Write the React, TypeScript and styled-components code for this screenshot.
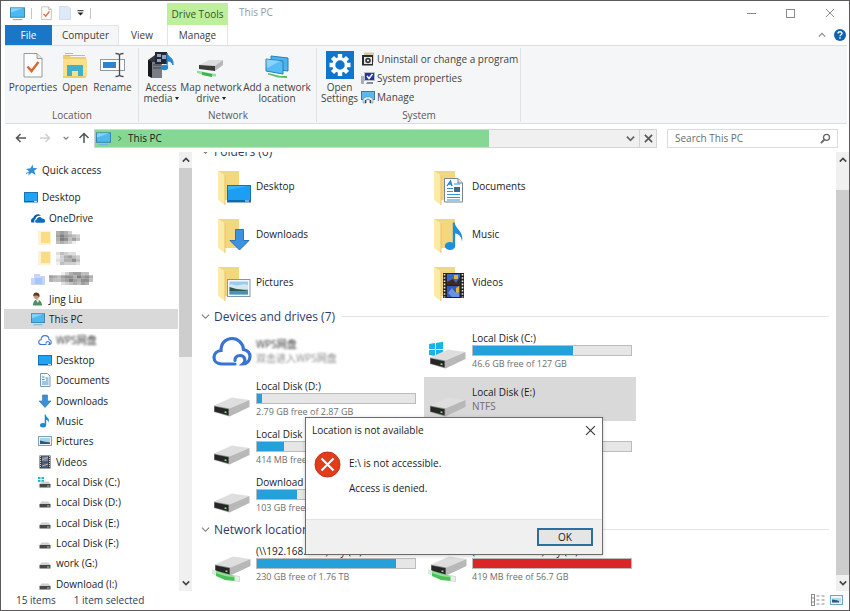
import React from "react";
import styled, { createGlobalStyle } from "styled-components";

const GlobalStyle = createGlobalStyle`
  * { box-sizing: border-box; }
  html, body, #root { height: 100%; }
  body {
    margin: 0;
    overflow: hidden;
    font-family: "Open Sans", "Noto Sans", "Noto Sans CJK SC", sans-serif;
    font-size: 10px;
    line-height: 14px;
    color: #1a1a1a;
  }
  button, input {
    font: inherit;
    color: inherit;
    border: 0;
    padding: 0;
    margin: 0;
    background: none;
  }
  ul { list-style: none; margin: 0; padding: 0; }
  svg { display: block; flex: none; }
`;

/* ---------- window frame ---------- */

const Window = styled.div`
  position: relative;
  display: flex;
  flex-direction: column;
  height: 100%;
  background: #fff;
  border: 1px solid #5c5a5b;
  overflow: hidden;
`;

const Header = styled.header`
  display: grid;
  grid-template-columns: 162px auto 1fr auto;
  grid-template-rows: 24px 20px;
  flex: none;
  padding-left: 4px;
`;

const QuickBar = styled.div`
  display: flex;
  align-items: center;
  padding-left: 5px;
`;

const QuickButton = styled.button<{ $w: number }>`
  display: flex;
  justify-content: center;
  width: ${(p) => p.$w}px;
`;

const Separator = styled.span<{ $space: number }>`
  width: 1px;
  height: 11px;
  margin: 0 ${(p) => p.$space}px;
  background: #c4c4c4;
`;

const ToolTab = styled.div`
  width: 61px;
  margin-top: 2px;
  padding-top: 4px;
  background: #bdf09b;
  color: #35552a;
  text-align: center;
`;

const WindowTitle = styled.h1`
  margin: 0;
  padding: 4px 0 0 11px;
  font-size: 10px;
  line-height: 14px;
  font-weight: 400;
  color: #9a9a9a;
`;

const WindowButtons = styled.div`
  display: flex;
  align-items: center;
`;

const CaptionButton = styled.button`
  display: flex;
  align-items: center;
  justify-content: center;
  width: 39px;
  height: 22px;
`;

const Tabs = styled.nav`
  display: flex;
`;

const Tab = styled.button<{ $w: number; $kind?: "file" | "active" | "tool" }>`
  width: ${(p) => p.$w}px;
  height: 20px;
  color: ${(p) => (p.$kind === "file" ? "#fff" : "#3c3c3c")};
  background: ${(p) => (p.$kind === "file" ? "#1a76c6" : p.$kind === "active" ? "#f5f6f7" : "#fff")};
  box-shadow: ${(p) =>
    p.$kind === "active"
      ? "inset -1px 1px 0 #e3e4e5"
      : p.$kind === "tool"
        ? "inset 1px 0 0 #e3e4e5, inset -1px 0 0 #e3e4e5"
        : "none"};
`;

const RibbonTools = styled.div`
  grid-column: 4;
  display: flex;
  align-items: center;
  justify-content: flex-end;
  gap: 8px;
  padding-right: 3px;
`;

/* ---------- ribbon ---------- */

const Ribbon = styled.div`
  display: flex;
  flex: none;
  height: 79px;
  margin: 0 2px 0 4px;
  background: #f5f6f7;
  border-top: 1px solid #dcdddf;
  border-bottom: 1px solid #dcdddf;
`;

const Group = styled.section<{ $w: number }>`
  display: flex;
  flex-direction: column;
  justify-content: space-between;
  width: ${(p) => p.$w}px;
  margin: 2px 0 1px;
  padding: 2px 3px 0 4px;
  border-right: 1px solid #e1e2e4;
`;

const GroupItems = styled.div`
  display: flex;
  align-items: flex-start;
`;

const GroupLabel = styled.div`
  color: #5a5a5a;
  text-align: center;
`;

const BigButton = styled.button<{ $w: number }>`
  display: flex;
  flex-direction: column;
  align-items: center;
  gap: 2px;
  width: ${(p) => p.$w}px;
  line-height: 11px;
  color: #444;
  white-space: nowrap;
`;

const SmallList = styled.div`
  display: flex;
  flex-direction: column;
  margin-top: -1px;
  padding-left: 3px;
`;

const SmallButton = styled.button`
  display: flex;
  align-items: center;
  gap: 2px;
  height: 19px;
  color: #444;
  white-space: nowrap;
`;

const Caret = styled.span`
  display: inline-block;
  margin-left: 2px;
  vertical-align: 2px;
  border: 2px solid transparent;
  border-top: 3px solid #222;
  border-bottom: 0;
`;

/* ---------- address row ---------- */

const AddressRow = styled.div`
  display: flex;
  align-items: center;
  flex: none;
  height: 28px;
  padding: 0 11px 0 10px;
`;

const NavButton = styled.button<{ $w: number }>`
  display: flex;
  align-items: center;
  justify-content: center;
  width: ${(p) => p.$w}px;
  height: 18px;
`;

const AddressBar = styled.div`
  display: flex;
  flex: 1;
  height: 19px;
  border: 1px solid #d4d4d4;
  background: #f0f0f0;
`;

const Crumbs = styled.div<{ $progress: number }>`
  display: flex;
  flex: 1;
  align-items: center;
  gap: 5px;
  padding: 0 4px 0 1px;
  background: linear-gradient(#85d793, #85d793) 0 0 / ${(p) => p.$progress}% 100% no-repeat;
  color: #10240f;
`;

const CrumbButton = styled.button`
  flex: 1;
  text-align: left;
`;

const StopButton = styled.button`
  display: flex;
  align-items: center;
  justify-content: center;
  width: 17px;
  border-left: 1px solid #d4d4d4;
`;

const SearchBox = styled.label`
  display: flex;
  align-items: center;
  width: 171px;
  height: 19px;
  margin-left: 10px;
  padding: 0 6px 0 7px;
  border: 1px solid #dcdcdc;
`;

const SearchInput = styled.input`
  flex: 1;
  min-width: 0;
  outline: 0;
  &::placeholder { color: #6b6b6b; opacity: 1; }
`;

/* ---------- body ---------- */

const Body = styled.div`
  display: flex;
  flex: 1;
  min-height: 0;
`;

const Sidebar = styled.nav`
  width: 178px;
  flex: none;
  padding: 8px 1px 0 3px;
  overflow: hidden;
`;

const SideGroup = styled.ul<{ $fill?: boolean }>`
  display: flex;
  flex-direction: column;
  height: ${(p) => (p.$fill ? "calc(100% - 24px)" : "20px")};
  margin-top: ${(p) => (p.$fill ? "7px" : "0")};
`;

const SideRow = styled.li`
  display: flex;
  flex: 1 0 20px;
`;

const SideButton = styled.button<{ $level: number; $on?: boolean }>`
  display: flex;
  flex: 1;
  align-items: center;
  gap: 4px;
  padding-left: ${(p) => 13 + p.$level * 7}px;
  background: ${(p) => (p.$on ? "#d9d9d9" : "transparent")};
  white-space: nowrap;
`;

const Redacted = styled.span<{ $soft?: boolean }>`
  color: ${(p) => (p.$soft ? "#8a8a8a" : "#333")};
  filter: blur(1px);
`;

const Scrollbar = styled.div`
  display: flex;
  flex-direction: column;
  flex: none;
  width: 13px;
  background: #f0f0f0;
`;

const ScrollButton = styled.button`
  display: flex;
  align-items: center;
  justify-content: center;
  height: 16px;
`;

const Thumb = styled.div<{ $before: number; $size: number; $after: number }>`
  flex: 1;
  display: grid;
  grid-template-rows: ${(p) => `${p.$before}fr ${p.$size}fr ${p.$after}fr`};
  &::after {
    content: "";
    grid-row: 2;
    background: #cdcdcd;
  }
`;

const Content = styled.main`
  flex: 1;
  min-width: 0;
  overflow: hidden;
  padding: 0 7px 0 9px;
`;

const Sections = styled.div`
  margin-top: -13px;
`;

const SectionTitle = styled.h2`
  display: flex;
  align-items: center;
  gap: 4px;
  height: 25px;
  margin: 0;
  font-size: 12px;
  line-height: 16px;
  font-weight: 400;
  color: #2b3b6d;
  white-space: nowrap;
  &::after {
    content: "";
    flex: 1;
    height: 1px;
    margin-left: 3px;
    background: #e4e4e4;
  }
`;

const Tiles = styled.ul`
  display: grid;
  grid-template-columns: repeat(auto-fill, 212px);
  grid-auto-rows: 44px;
  gap: 4px;
  padding-left: 7px;
`;

const Tile = styled.li<{ $on?: boolean }>`
  display: flex;
  align-items: center;
  gap: 4px;
  padding: 0 4px;
  background: ${(p) => (p.$on ? "#d9d9d9" : "transparent")};
`;

const TileText = styled.div`
  flex: 1;
  min-width: 0;
  white-space: nowrap;
`;

const Note = styled.div<{ $small?: boolean }>`
  font-size: ${(p) => (p.$small ? 9 : 10)}px;
  color: #6e6e6e;
`;

const Meter = styled.div`
  width: 160px;
  height: 11px;
  margin: 0 0 1px;
  border: 1px solid #bcbcbc;
  background: #e6e6e6;
`;

const MeterFill = styled.div<{ $full?: boolean }>`
  height: 100%;
  background: ${(p) => (p.$full ? "#da2626" : "#26a0da")};
`;

const StatusBar = styled.footer`
  display: flex;
  align-items: center;
  flex: none;
  height: 19px;
  gap: 18px;
  padding: 0 6px 2px 15px;
  color: #2a3c5c;
`;

const ViewButtons = styled.div`
  display: flex;
  gap: 5px;
  margin-left: auto;
`;

/* ---------- dialog ---------- */

const Dialog = styled.div`
  position: absolute;
  left: 304px;
  top: 416px;
  width: 298px;
  display: flex;
  flex-direction: column;
  background: #fff;
  border: 1px solid #6c6c6c;
  box-shadow: 0 1px 4px rgba(0, 0, 0, 0.2);
`;

const DialogHead = styled.div`
  display: flex;
  align-items: center;
  justify-content: space-between;
  height: 24px;
  padding: 0 6px;
`;

const DialogBody = styled.div`
  display: flex;
  gap: 8px;
  height: 77px;
  padding: 9px 9px 0 8px;
`;

const DialogText = styled.div`
  display: flex;
  flex-direction: column;
  gap: 11px;
  padding-top: 5px;
`;

const DialogFoot = styled.div`
  display: flex;
  justify-content: flex-end;
  height: 35px;
  padding: 8px 9px 0;
  background: #f0f0f0;
  border-top: 1px solid #e3e3e3;
`;

const OkButton = styled.button`
  width: 56px;
  height: 18px;
  background: #e5e5e5;
  border: 2px solid #2c6f9f;
  line-height: 14px;
`;

/* ---------- drawings ---------- */

const Pc = ({ size = 15 }: { size?: number }) => (
  <svg width={size} height={size} viewBox="0 0 16 16">
    <rect x="0.5" y="2" width="15" height="10" fill="#4db8f2" stroke="#3a7fa8" />
    <path d="M1 12V7L14 2.5H1z" fill="#86d3fa" />
    <path d="M3 14.5h10" stroke="#6fb6dc" strokeWidth="1.2" />
  </svg>
);

const DesktopMini = () => (
  <svg width="14" height="14" viewBox="0 0 14 14">
    <rect x="0.5" y="2.5" width="13" height="9.5" fill="#1fa4f4" stroke="#1876b5" />
    <path d="M1 11.5h12" stroke="#0b63a5" />
    <path d="M10 11.5h3" stroke="#bfe3fb" />
  </svg>
);

const CheckPage = ({ w, h }: { w: number; h: number }) => (
  <svg width={w} height={h} viewBox="0 0 20 26">
    <path d="M1 1.5h13l5 5V25H1z" fill="#fcfcfc" stroke="#9a9a9a" />
    <path d="M14 1.5v5h5" fill="#e8e8e8" stroke="#9a9a9a" />
    <path d="M4.500 14.500l4 4.500 7-9" fill="none" stroke="#d9692c" strokeWidth="2.400" />
  </svg>
);

const PaleFolder = () => (
  <svg width="12" height="14" viewBox="0 0 12 14">
    <path d="M0.500 0.500h8l3 2v11h-11z" fill="#dfe9f8" stroke="#d0def2" />
  </svg>
);

const OpenFolder = () => (
  <svg width="26" height="30" viewBox="0 0 26 30">
    <path d="M1 5h6l2 2h15v21H1z" fill="#efcf6d" />
    <path d="M3 3.500h8M3 5.500h20" stroke="#d3ba72" />
    <path d="M1 9h24v17H1z" fill="#fbe08b" />
    <path d="M5 26V15h16v11h-5v-5h-6v5z" fill="#42b0cb" />
  </svg>
);

const RenameIcon = () => (
  <svg width="26" height="30" viewBox="0 0 26 30">
    <rect x="0.500" y="9.500" width="24" height="11" fill="#fff" stroke="#8d9aa5" />
    <rect x="3" y="12" width="13" height="6" fill="#2f84d0" />
    <path d="M15.500 3.500c2.500 0 4 .5 4 2v19c0 1.500-1.500 2-4 2M23.500 3.500c-2.500 0-4 .5-4 2v19c0 1.500 1.500 2 4 2" fill="none" stroke="#4c4c4c" strokeWidth="1.300" />
  </svg>
);

const MediaIcon = () => (
  <svg width="28" height="30" viewBox="0 0 28 30">
    <path d="M1 10l7-5h9l-3 5v17H5l-4-2z" fill="#33363c" />
    <path d="M5 12h10v16H5z" fill="#787d86" />
    <path d="M1 10l4 2v16l-4-2z" fill="#16181c" />
    <path d="M6 15h8M6 18h8" stroke="#3c4048" />
    <rect x="8" y="2" width="12" height="12" fill="#222732" />
    <path d="M10 4h4v3h-4zM15 5h4v4h-4zM10 9h4v3h-4z" fill="#8fa3c4" />
    <ellipse cx="17.500" cy="17.500" rx="3.600" ry="2.800" fill="#1d88d8" />
    <path d="M20 17.500V3c1 5 7 4 6 12-1-3-3-4-5-4" fill="#1d88d8" stroke="#1d88d8" />
  </svg>
);

const NetDriveIcon = () => (
  <svg width="30" height="30" viewBox="0 0 30 30">
    <path d="M3 15l10-5h14l-7 6z" fill="#dcdcdc" />
    <path d="M19 16l8-6v5l-8 6z" fill="#b7b7b7" />
    <path d="M3 15l16 1v5L3 19z" fill="#3b3b3b" />
    <path d="M1 20.500l12 2.500 7 1v2.500l-8-.5-11-3z" fill="#8fe09a" />
    <path d="M6 22l10 2v3l-10-2z" fill="#3fb152" />
  </svg>
);

const NetPlaceIcon = () => (
  <svg width="28" height="30" viewBox="0 0 28 30">
    <path d="M8 6l17 2v13L8 19z" fill="#4bb4ee" stroke="#2b7eb4" />
    <path d="M3 9l17 2v13L3 21z" fill="#56bcf3" stroke="#2b7eb4" />
    <path d="M3.500 9.500l14 1.500L4 18z" fill="#8ad3f8" />
    <path d="M5 23l12 3 7 0v2l-9-.5-10-3z" fill="#52c163" />
  </svg>
);

const GearTile = () => (
  <svg width="28" height="30" viewBox="0 0 28 30">
    <rect y="1" width="28" height="28" fill="#0f76cc" />
    <g stroke="#fff" strokeWidth="4.400">
      <path d="M14 4v5M14 21v5M3.500 15h5M19.500 15h5M6.500 7.500l3.500 3.500M18 19l3.500 3.500M21.500 7.500L18 11M10 19l-3.500 3.500" />
    </g>
    <circle cx="14" cy="15" r="6.200" fill="#0f76cc" stroke="#fff" strokeWidth="3" />
  </svg>
);

const ProgramsIcon = () => (
  <svg width="14" height="14" viewBox="0 0 14 14">
    <path d="M3 0.500h10V10H3z" fill="#d6c9a5" />
    <path d="M1 3h11v10.500H1z" fill="#2d2d2d" />
    <path d="M3 5h8v7H3z" fill="#e8e8e8" />
    <circle cx="7" cy="8.500" r="2.800" fill="#3b3b3b" />
    <circle cx="7" cy="8.500" r="1" fill="#fff" />
  </svg>
);

const SysPropIcon = () => (
  <svg width="14" height="14" viewBox="0 0 14 14">
    <path d="M0 5h3v8H0z" fill="#a9adb4" />
    <rect x="3.500" y="1.500" width="10" height="8" fill="#2634a4" stroke="#b8bccb" />
    <path d="M6 5l2 2.500L11.500 3" fill="none" stroke="#fff" strokeWidth="1.500" />
    <path d="M6 11h6v2H5z" fill="#8a8e96" />
  </svg>
);

const ManageIcon = () => (
  <svg width="14" height="14" viewBox="0 0 14 14">
    <rect x="0.500" y="1.500" width="13" height="8" fill="#5cb9e9" stroke="#45799a" />
    <path d="M2 13V9l3-2h4l3 2v4H9v-3L7 9l-2 1v3z" fill="#eaf2f6" stroke="#6d8795" strokeWidth="0.600" />
    <path d="M4.500 10v3M9.500 10v3" stroke="#2c4656" strokeWidth="1.400" />
  </svg>
);

const Chevron = ({ dir, size = 8, color = "#444", weight = 1.5 }: { dir: "up" | "down" | "right"; size?: number; color?: string; weight?: number }) => (
  <svg width={size} height={size} viewBox="0 0 10 10">
    <path
      d={dir === "up" ? "M1 7l4-4 4 4" : dir === "down" ? "M1 3l4 4 4-4" : "M3.500 1.500L7 5 3.500 8.500"}
      fill="none"
      stroke={color}
      strokeWidth={weight}
    />
  </svg>
);

const Arrow = ({ dir, color }: { dir: "left" | "right" | "up"; color: string }) => (
  <svg width="12" height="12" viewBox="0 0 12 12">
    <path
      d={dir === "left" ? "M11 6H1.500M5.500 2L1.500 6l4 4" : dir === "right" ? "M1 6h9.500M6.500 2l4 4-4 4" : "M6 11V1.500M1.500 6L6 1.500 10.500 6"}
      fill="none"
      stroke={color}
      strokeWidth="1.500"
    />
  </svg>
);

const Cross = ({ size, color, weight = 1 }: { size: number; color: string; weight?: number }) => (
  <svg width={size} height={size} viewBox="0 0 10 10">
    <path d="M1 1l8 8M9 1L1 9" stroke={color} strokeWidth={weight} />
  </svg>
);

const Star = () => (
  <svg width="14" height="14" viewBox="0 0 14 14">
    <path d="M8.500 1.500l.8 3.500 4.200.3-3.300 2.500 1.300 4.200-3.700-2.200-3.600 2.700.9-4.300L2 6l4.500-.8z" fill="#2f8fdb" />
    <path d="M2 10.500l3-1.500" stroke="#2f8fdb" />
  </svg>
);

const OneDriveIcon = () => (
  <svg width="14" height="14" viewBox="0 0 14 14">
    <path d="M0 10c0-2 1-2.800 2.200-3C3 3.500 8 1.500 10 5c-3-1-5.500 1-5.500 3C3 8.500 3 10 3.500 11.500H1.500C.5 11.500 0 11 0 10z" fill="#0a5ea8" />
    <path d="M4.500 11.500c-.8-1.500 0-2.900 1.200-3.100C6 5.500 10 5 11 7.500c2 0 3 .8 3 2.200s-.6 2.100-1.500 2.100H5.500c-.4 0-.8-.1-1-.3z" fill="#0f6cbf" />
  </svg>
);

const BlurFolder = ({ color = "#f9dd85" }: { color?: string }) => (
  <svg width="14" height="16" viewBox="0 0 14 16">
    <rect x="0" y="1" width="13" height="14" fill={color} opacity="0.350" />
    <rect x="3" y="2" width="9" height="11" fill={color} />
  </svg>
);

const BlueBlock = () => (
  <svg width="14" height="14" viewBox="0 0 14 14">
    <path d="M0 6h3V2h6v2h5v9H0z" fill="#c4d6f8" />
    <path d="M4 6h7v6H4z" fill="#a9c4f6" />
  </svg>
);

const UserIcon = () => (
  <svg width="14" height="14" viewBox="0 0 14 14">
    <path d="M2 13.500c0-4 2-6 4-6s5 2 5 6z" fill="#4e9164" />
    <circle cx="5.500" cy="4" r="3" fill="#c99671" />
    <path d="M2.500 4C2 1 4 .3 5.500.4 8 .5 9 2.500 8.200 5 7 3.500 5 3 2.500 4z" fill="#5a3c2d" />
    <path d="M5 8l2 3 1-3" fill="#e9efe9" />
  </svg>
);

const CloudIcon = ({ size, weight }: { size: number; weight: number }) => (
  <svg width={size} height={size} viewBox="0 0 40 40">
    <path
      d="M23 33H10C5 33 2 30 2 26.500c0-4 3-6.500 7-7C9 12 14 7.500 20 7.500S31 12 31.500 18.500c4 1 6.500 3.500 6.500 7 0 4-3 7.500-7 7.500 3-2.500 2.500-8.500-3-8.500-3.500 0-5.500 2.500-5 5"
      fill="none"
      stroke="#3a74d2"
      strokeWidth={weight}
      strokeLinecap="round"
    />
  </svg>
);

const DocIcon = () => (
  <svg width="14" height="14" viewBox="0 0 14 14">
    <path d="M2.500 0.500h7l2.500 2.500v10.500H2.500z" fill="#f5fafd" stroke="#7c9bb0" />
    <path d="M4 4h2.500M7.500 5h3M4 6.500h2.500M4 9h6.500M4 11h6.500M8 7h2.500" stroke="#3c92cb" />
  </svg>
);

const DownIcon = () => (
  <svg width="14" height="14" viewBox="0 0 14 14">
    <path d="M4.500 1h5v6H13L7 13.500 1 7h3.500z" fill="#3a8fdb" stroke="#2c72b4" strokeWidth="0.600" />
  </svg>
);

const NoteIcon = () => (
  <svg width="14" height="14" viewBox="0 0 14 14">
    <ellipse cx="5" cy="11.200" rx="3" ry="2.200" fill="#1d88d0" />
    <path d="M6.700 11V.5h1c.2 3 4.500 3.500 3 8-.5-2-1.500-2.500-2.500-2.700V11z" fill="#1d88d0" />
  </svg>
);

const PicIcon = () => (
  <svg width="14" height="14" viewBox="0 0 14 14">
    <rect x="0.500" y="2.500" width="13" height="9" fill="#eef5fa" stroke="#7fa2b9" />
    <rect x="2" y="4" width="10" height="6" fill="#a9d2ec" />
    <path d="M2 6.500l4 1 6 1V10H2z" fill="#2d5a78" />
  </svg>
);

const FilmIcon = () => (
  <svg width="14" height="14" viewBox="0 0 14 14">
    <rect x="1.500" y="0.500" width="11" height="13" fill="#3a3f4a" />
    <path d="M2.500 1v12M11.500 1v12" stroke="#c7cbd2" strokeDasharray="1 1" />
    <rect x="4" y="1.500" width="6" height="5" fill="#6f86ae" />
    <rect x="4" y="7.500" width="6" height="5" fill="#4b628c" />
    <path d="M4 5l6-3M4 11l6-2" stroke="#c9b67a" />
  </svg>
);

const MiniDrive = ({ win }: { win?: boolean }) => (
  <svg width="14" height="14" viewBox="0 0 14 14">
    {win && <path d="M0 2h2.500v2H0zM3.500 2H6v2H3.500zM0 5h2.500v2H0zM3.500 5H6v2H3.500z" fill="#25b3cf" />}
    <path d="M3.500 6.500h7l2 2.500h-11z" fill="#cfcfcf" />
    <path d="M1.500 9h11v3.500h-11z" fill="#474747" />
    <path d="M9 11h2.500" stroke="#9fd0a0" />
  </svg>
);

const DriveIcon = ({ win, net }: { win?: boolean; net?: boolean }) => (
  <svg width="40" height="40" viewBox="0 0 40 40">
    {win && (
      <path d="M1 13l6-1v6H1zM8 12l7-1.200V18H8zM1 19h6v6l-6-1zM8 19h7v7.200L8 25z" fill="#19b2ea" />
    )}
    <g transform={net ? "translate(1 -6)" : undefined}>
      <path d="M2 26.500L20 18.500l17.500 2.500-20 8.500z" fill="#dedede" />
      <path d="M17.500 29.500l20-8.500v7l-20 9.500z" fill="#b8b8b8" />
      <path d="M2 26.500l15.500 3v8L2 33z" fill="#8f8f8f" />
      <path d="M2.500 27.500l14 2.700v6L2.500 32.500z" fill="#262626" />
      <path d="M12.500 33l2 .5" stroke="#7ddc7a" strokeWidth="1.400" />
    </g>
    {net && (
      <>
        <path d="M0 25l5 2v5l-5-2z" fill="#d9eedd" />
        <path d="M4 27l9 3 10 2v5l-10-1-9-4z" fill="#46c257" />
        <path d="M4 27l9 3 10 2v1.500l-10-1.500-9-3z" fill="#8be394" />
        <path d="M22.500 31.500l5 1v5l-5-.5z" fill="#e6f1e8" stroke="#a9c8ad" strokeWidth="0.500" />
      </>
    )}
  </svg>
);

type FolderKind = "desktop" | "documents" | "downloads" | "music" | "pictures" | "videos";

const overlays: Record<FolderKind, React.ReactNode> = {
  desktop: (
    <>
      <rect x="15.500" y="19.500" width="23" height="16.500" fill="#1c9ff2" stroke="#1a70ad" />
      <path d="M16 34V24l20-4H16z" fill="#3eb2f8" />
      <path d="M16 35h22" stroke="#0c5e9c" strokeWidth="1.600" />
      <path d="M33 35h4" stroke="#d6edfb" />
    </>
  ),
  documents: (
    <>
      <path d="M16.500 12.500H30l4.500 4.500v19h-18z" fill="#fafcfd" stroke="#76858f" />
      <path d="M30 12.500V17h4.500" fill="#dfe6ea" stroke="#76858f" />
      <path d="M19 20l3.500-5 1.500 5M20.500 18h3" stroke="#1f83c8" strokeWidth="1.300" fill="none" />
      <path d="M26 18h6M19 22.500h6M19 25.500h6M19 28.500h13M19 31.500h13M19 34h13" stroke="#3a94cf" />
      <rect x="26" y="21" width="6" height="5" fill="#476780" />
    </>
  ),
  downloads: <path d="M23.500 15.500h8v11h5.500l-9.500 9.500-9.500-9.500h5.500z" fill="#3b92df" stroke="#2c74b6" />,
  music: (
    <>
      <ellipse cx="22" cy="32" rx="5.200" ry="4" fill="#1e8fd8" />
      <path d="M24.800 32V8.500h2c.5 7 9.500 8.500 7.200 19.500-.2-5-3-8-6.800-8.500V32z" fill="#1e8fd8" />
    </>
  ),
  pictures: (
    <>
      <rect x="15.500" y="17.500" width="22.500" height="17" fill="#f4f8fa" stroke="#7d9aab" />
      <rect x="17.500" y="19.500" width="18.500" height="13" fill="#9bcbec" />
      <path d="M17.500 23c3-2 5 1 8 .5s6-2 10.500-.5v4H17.500z" fill="#d3e8f5" />
      <path d="M17.500 25l7 2 11.500 1.500v1H17.500z" fill="#2c5b4d" />
      <path d="M17.500 29.500H36v3H17.500z" fill="#4c8fb5" />
    </>
  ),
  videos: (
    <>
      <rect x="15" y="11" width="21" height="25" fill="#222" />
      <path d="M16.500 12v23.500M34.500 12v23.500" stroke="#e9e9e9" strokeWidth="1.600" strokeDasharray="1.600 1.600" />
      <rect x="19" y="12" width="13" height="11" fill="#3f66c7" />
      <rect x="19" y="24" width="13" height="11" fill="#3558bb" />
      <path d="M19 20l6-3 3 4 4-6v8H19z" fill="#3c2c20" />
      <path d="M26 13h4v4h-4zM28 26l3-2v6l-3 3z" fill="#d9b53a" />
      <path d="M20 31l4-5 3 4 4 1v4H24z" fill="#6c93e2" />
    </>
  ),
};

const FolderIcon = ({ kind }: { kind: FolderKind }) => (
  <svg width="40" height="40" viewBox="0 0 40 40">
    <path d="M6 5h21v29H10z" fill="#f3d685" />
    <path d="M14 7h13v27H13z" fill="#f4d67c" />
    <path d="M6 5l7 4v30l-7-5z" fill="#fde9a8" />
    <path d="M13 9v30" stroke="#e2bb5a" strokeWidth="0.800" />
    {overlays[kind]}
  </svg>
);

/* Pixelated stand-in for a name that is hidden in the tree. */
const Mosaic = ({ rows }: { rows: string[] }) => (
  <svg width={rows[0].length * 4} height="13" viewBox={`0 0 ${rows[0].length * 4} 13`}>
    {rows.map((row, y) =>
      row.split("").map((v, x) => {
        const g = 255 - Number(v) * 16;
        return <rect key={`${x}-${y}`} x={x * 4} y={y * 3.3} width="4.100" height="3.400" fill={`rgb(${g},${g},${g})`} />;
      })
    )}
  </svg>
);

const HelpIcon = () => (
  <svg width="12" height="12" viewBox="0 0 12 12">
    <circle cx="6" cy="6" r="6" fill="#0d63ae" />
    <path d="M4 4.600C4 2 8.200 2.200 8 4.500 7.900 5.800 6 5.800 6 7.200M6 8.300v1.500" fill="none" stroke="#fff" strokeWidth="1.400" />
  </svg>
);

const SearchIcon = () => (
  <svg width="11" height="11" viewBox="0 0 11 11">
    <circle cx="6.500" cy="4.300" r="3" fill="none" stroke="#666" strokeWidth="1.300" />
    <path d="M4.300 6.600L1 10" stroke="#666" strokeWidth="1.800" />
  </svg>
);

const ErrorIcon = () => (
  <svg width="27" height="27" viewBox="0 0 27 27">
    <circle cx="13.500" cy="13.500" r="12.500" fill="#e23c1b" stroke="#c12f13" />
    <path d="M7.500 7.500l12 12M19.500 7.500l-12 12" stroke="#fff" strokeWidth="2" />
  </svg>
);

const DetailsIcon = () => (
  <svg width="14" height="12" viewBox="0 0 14 12">
    <rect x="0.500" y="0.500" width="3" height="11" fill="none" stroke="#8b8b8b" />
    <path d="M0.500 4h3M0.500 8h3M5.500 2h3M10.500 2h3M5.500 6h3M10.500 6h3M5.500 10h3M10.500 10h3" stroke="#8b8b8b" />
  </svg>
);

const LargeIcon = () => (
  <svg width="13" height="12" viewBox="0 0 13 12">
    <rect x="0.500" y="1.500" width="12" height="9" fill="#eef6fb" stroke="#6fa3c6" />
    <path d="M2 4h9v4.500H2z" fill="#bcd9eb" />
    <path d="M2 5.500l4 .5 3 1v1.500H2z" fill="#2b5c80" />
  </svg>
);

/* ---------- data ---------- */

type SideItem = { id: string; label?: string; icon: React.ReactNode; level: number; on?: boolean; mosaic?: string[]; hidden?: boolean };

const sideItems: SideItem[] = [
  { id: "desktop", label: "Desktop", icon: <DesktopMini />, level: 1 },
  { id: "onedrive", label: "OneDrive", icon: <OneDriveIcon />, level: 2 },
  { id: "f1", icon: <BlurFolder />, level: 3, mosaic: ["565300", "686543", "587464", "454310"] },
  { id: "f2", icon: <BlurFolder />, level: 3, mosaic: ["243220", "135643", "235574", "143332"] },
  { id: "f3", icon: <BlueBlock />, level: 2, mosaic: ["00013566440", "65467758675", "54456865774", "00023454650"] },
  { id: "user", label: "Jing Liu", icon: <UserIcon />, level: 2 },
  { id: "pc", label: "This PC", icon: <Pc size={14} />, level: 2, on: true },
  { id: "wps", label: "WPS网盘", icon: <CloudIcon size={14} weight={3} />, level: 3, hidden: true },
  { id: "desk2", label: "Desktop", icon: <DesktopMini />, level: 3 },
  { id: "docs", label: "Documents", icon: <DocIcon />, level: 3 },
  { id: "down", label: "Downloads", icon: <DownIcon />, level: 3 },
  { id: "music", label: "Music", icon: <NoteIcon />, level: 3 },
  { id: "pics", label: "Pictures", icon: <PicIcon />, level: 3 },
  { id: "vids", label: "Videos", icon: <FilmIcon />, level: 3 },
  { id: "c", label: "Local Disk (C:)", icon: <MiniDrive win />, level: 3 },
  { id: "d", label: "Local Disk (D:)", icon: <MiniDrive />, level: 3 },
  { id: "e", label: "Local Disk (E:)", icon: <MiniDrive />, level: 3 },
  { id: "f", label: "Local Disk (F:)", icon: <MiniDrive />, level: 3 },
  { id: "g", label: "work (G:)", icon: <MiniDrive />, level: 3 },
  { id: "i", label: "Download (I:)", icon: <MiniDrive />, level: 3 },
];

const folders: { kind: FolderKind; label: string }[] = [
  { kind: "desktop", label: "Desktop" },
  { kind: "documents", label: "Documents" },
  { kind: "downloads", label: "Downloads" },
  { kind: "music", label: "Music" },
  { kind: "pictures", label: "Pictures" },
  { kind: "videos", label: "Videos" },
];

type Drive = { name: string; used?: number; note: string; win?: boolean; net?: boolean; full?: boolean; on?: boolean };

const drives: Drive[] = [
  { name: "Local Disk (C:)", used: 63, note: "46.6 GB free of 127 GB", win: true },
  { name: "Local Disk (D:)", used: 3, note: "2.79 GB free of 2.87 GB" },
  { name: "Local Disk (E:)", note: "NTFS", on: true },
  { name: "Local Disk (F:)", used: 17, note: "414 MB free of 500 MB" },
  { name: "work (G:)", used: 40, note: "" },
  { name: "Download (I:)", used: 25, note: "103 GB free of 138 GB" },
];

const shares: Drive[] = [
  { name: "(\\\\192.168.1.10) my (Y:)", used: 88, note: "230 GB free of 1.76 TB", net: true },
  { name: "(\\\\192.168.1.10) my (Z:)", used: 100, note: "419 MB free of 56.7 GB", net: true, full: true },
];

const DriveTile = ({ drive }: { drive: Drive }) => (
  <Tile $on={drive.on}>
    <DriveIcon win={drive.win} net={drive.net} />
    <TileText>
      <div>{drive.name}</div>
      {drive.used !== undefined && (
        <Meter role="meter" aria-label={drive.name} aria-valuenow={drive.used} aria-valuemin={0} aria-valuemax={100}>
          <MeterFill $full={drive.full} style={{ width: `${drive.used}%` }} />
        </Meter>
      )}
      <Note $small={drive.used !== undefined}>{drive.note || "\u00a0"}</Note>
    </TileText>
  </Tile>
);

const ScrollTrack = ({ before, size, after }: { before: number; size: number; after: number }) => (
  <Scrollbar>
    <ScrollButton aria-label="Scroll up"><Chevron dir="up" weight={2} /></ScrollButton>
    <Thumb $before={before} $size={size} $after={after} />
    <ScrollButton aria-label="Scroll down"><Chevron dir="down" weight={2} /></ScrollButton>
  </Scrollbar>
);

export default function App() {
  return (
    <>
      <GlobalStyle />
      <Window>
        <Header>
          <QuickBar>
            <Pc />
            <Separator $space={6} />
            <QuickButton $w={16} aria-label="Properties"><CheckPage w={11} h={14} /></QuickButton>
            <QuickButton $w={22} aria-label="New folder"><PaleFolder /></QuickButton>
            <QuickButton $w={9} aria-label="Customize">
              <svg width="7" height="6" viewBox="0 0 7 6"><path d="M0.500 0.700h6" stroke="#222" /><path d="M0.500 2.500h6L3.500 5.500z" fill="#222" /></svg>
            </QuickButton>
            <Separator $space={5} />
          </QuickBar>
          <ToolTab>Drive Tools</ToolTab>
          <WindowTitle>This PC</WindowTitle>
          <WindowButtons>
            <CaptionButton aria-label="Minimize">
              <svg width="9" height="9" viewBox="0 0 9 9"><path d="M0 4.500h9" stroke="#8a8a8a" /></svg>
            </CaptionButton>
            <CaptionButton aria-label="Maximize">
              <svg width="9" height="9" viewBox="0 0 9 9"><rect x="0.500" y="0.500" width="8" height="8" fill="none" stroke="#8a8a8a" /></svg>
            </CaptionButton>
            <CaptionButton aria-label="Close"><Cross size={10} color="#8a8a8a" /></CaptionButton>
          </WindowButtons>
          <Tabs>
            <Tab $w={47} $kind="file">File</Tab>
            <Tab $w={67} $kind="active">Computer</Tab>
            <Tab $w={46}>View</Tab>
          </Tabs>
          <Tab $w={61} $kind="tool">Manage</Tab>
          <RibbonTools>
            <Chevron dir="up" size={8} color="#8a8a8a" weight={1.5} />
            <HelpIcon />
          </RibbonTools>
        </Header>

        <Ribbon>
          <Group $w={134}>
            <GroupItems>
              <BigButton $w={48}><svg width="22" height="30" viewBox="0 0 22 30"><g transform="translate(1 2)"><CheckPage w={20} h={26} /></g></svg>Properties</BigButton>
              <BigButton $w={36}><OpenFolder />Open</BigButton>
              <BigButton $w={39}><RenameIcon />Rename</BigButton>
            </GroupItems>
            <GroupLabel>Location</GroupLabel>
          </Group>
          <Group $w={178}>
            <GroupItems>
              <BigButton $w={36}><MediaIcon /><span>Access<br />media<Caret /></span></BigButton>
              <BigButton $w={64}><NetDriveIcon /><span>Map network<br />drive<Caret /></span></BigButton>
              <BigButton $w={68}><NetPlaceIcon /><span>Add a network<br />location</span></BigButton>
            </GroupItems>
            <GroupLabel>Network</GroupLabel>
          </Group>
          <Group $w={204}>
            <GroupItems>
              <BigButton $w={38}><GearTile /><span>Open<br />Settings</span></BigButton>
              <SmallList>
                <SmallButton><ProgramsIcon />Uninstall or change a program</SmallButton>
                <SmallButton><SysPropIcon />System properties</SmallButton>
                <SmallButton><ManageIcon />Manage</SmallButton>
              </SmallList>
            </GroupItems>
            <GroupLabel>System</GroupLabel>
          </Group>
        </Ribbon>

        <AddressRow>
          <NavButton $w={20} aria-label="Back"><Arrow dir="left" color="#555" /></NavButton>
          <NavButton $w={28} aria-label="Forward"><Arrow dir="right" color="#cfcfcf" /></NavButton>
          <NavButton $w={14} aria-label="Recent"><Chevron dir="down" size={6} color="#777" weight={2} /></NavButton>
          <NavButton $w={21} aria-label="Up"><Arrow dir="up" color="#555" /></NavButton>
          <AddressBar>
            <Crumbs $progress={72.5}>
              <Pc />
              <Chevron dir="right" size={7} color="#4c8a58" />
              <CrumbButton>This PC</CrumbButton>
              <Chevron dir="down" size={9} color="#666" weight={2} />
            </Crumbs>
            <StopButton aria-label="Stop"><Cross size={9} color="#555" weight={1.800} /></StopButton>
          </AddressBar>
          <SearchBox>
            <SearchInput aria-label="Search This PC" placeholder="Search This PC" />
            <SearchIcon />
          </SearchBox>
        </AddressRow>

        <Body>
          <Sidebar>
            <SideGroup>
              <SideRow><SideButton $level={1}><Star />Quick access</SideButton></SideRow>
            </SideGroup>
            <SideGroup $fill>
              {sideItems.map((item) => (
                <SideRow key={item.id}>
                  <SideButton $level={item.level} $on={item.on} aria-label={item.label ?? "Hidden item"}>
                    {item.icon}
                    {item.mosaic ? <Mosaic rows={item.mosaic} /> : item.hidden ? <Redacted>{item.label}</Redacted> : item.label}
                  </SideButton>
                </SideRow>
              ))}
            </SideGroup>
          </Sidebar>
          <ScrollTrack before={0} size={189} after={218} />
          <Content>
            <Sections>
              <SectionTitle><Chevron dir="down" size={9} color="#777" weight={1.200} />Folders (6)</SectionTitle>
              <Tiles>
                {folders.map((f) => (
                  <Tile key={f.kind}>
                    <FolderIcon kind={f.kind} />
                    <TileText>{f.label}</TileText>
                  </Tile>
                ))}
              </Tiles>
              <SectionTitle><Chevron dir="down" size={9} color="#777" weight={1.200} />Devices and drives (7)</SectionTitle>
              <Tiles>
                <Tile>
                  <CloudIcon size={40} weight={3.200} />
                  <TileText>
                    <div><Redacted>WPS网盘</Redacted></div>
                    <div><Redacted $soft>双击进入WPS网盘</Redacted></div>
                  </TileText>
                </Tile>
                {drives.map((d) => <DriveTile key={d.name} drive={d} />)}
              </Tiles>
              <SectionTitle><Chevron dir="down" size={9} color="#777" weight={1.200} />Network locations (2)</SectionTitle>
              <Tiles>
                {shares.map((d) => <DriveTile key={d.name} drive={d} />)}
              </Tiles>
            </Sections>
          </Content>
          <ScrollTrack before={22} size={385} after={0} />
        </Body>

        <StatusBar>
          <span>15 items</span>
          <span>1 item selected</span>
          <ViewButtons>
            <button aria-label="Details view"><DetailsIcon /></button>
            <button aria-label="Large icons view"><LargeIcon /></button>
          </ViewButtons>
        </StatusBar>

        <Dialog role="alertdialog" aria-labelledby="dialog-title">
          <DialogHead>
            <span id="dialog-title">Location is not available</span>
            <button aria-label="Close dialog"><Cross size={11} color="#333" /></button>
          </DialogHead>
          <DialogBody>
            <ErrorIcon />
            <DialogText>
              <div>E:\ is not accessible.</div>
              <div>Access is denied.</div>
            </DialogText>
          </DialogBody>
          <DialogFoot><OkButton>OK</OkButton></DialogFoot>
        </Dialog>
      </Window>
    </>
  );
}
